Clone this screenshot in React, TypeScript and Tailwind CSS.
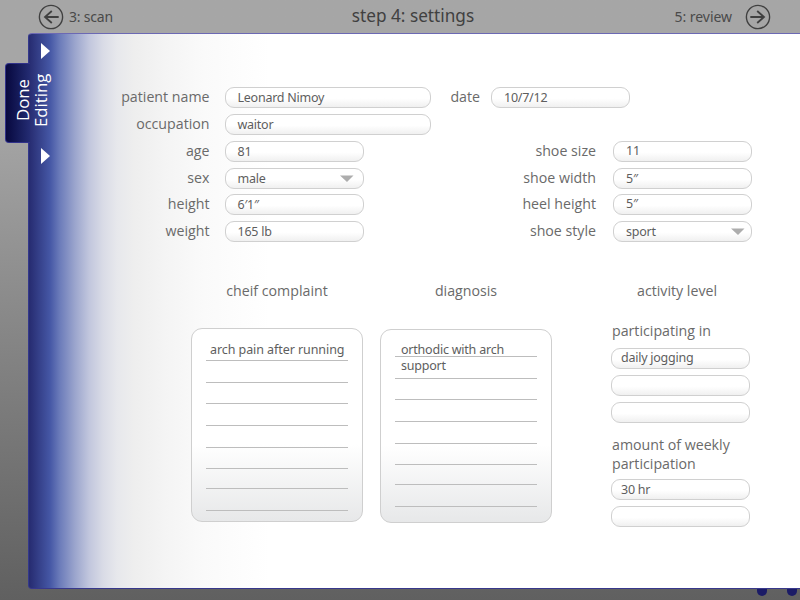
import React from "react";

const labelFont = "font-['Open_Sans','Noto_Sans',sans-serif] text-[14.2px] leading-[19px] text-[#6a6a6a] whitespace-nowrap";
const valueFont = "font-['Noto_Sans','Open_Sans',sans-serif] text-[12.5px] text-[#5e5e5e] whitespace-nowrap";

function Label({ children, className = "" }: { children: React.ReactNode; className?: string }) {
  return <span className={`${labelFont} ${className}`}>{children}</span>;
}

function RowLabel({ children, className }: { children: React.ReactNode; className: string }) {
  return <Label className={`pb-[2px] text-right ${className}`}>{children}</Label>;
}

function Field({
  value = "",
  wide = false,
  select = false,
  pad = "pl-[12px] pr-[8px]",
  className = "pt-[2px]",
}: {
  value?: string;
  wide?: boolean;
  select?: boolean;
  pad?: string;
  className?: string;
}) {
  return (
    <div
      className={`flex h-[21px] shrink-0 items-center justify-between rounded-[9px] border border-[#d0d0d0] bg-linear-to-b from-white from-55% to-[#f0f0f0] ${pad} ${wide ? "w-[206px]" : "w-[139px]"}`}
    >
      <span className={`tracking-[-0.25px] ${valueFont} ${className}`}>{value}</span>
      {select && (
        <svg width="14" height="7" viewBox="0 0 14 7" className="shrink-0">
          <path d="M0 0.5H13.5L7 7Z" fill="#adadad" />
        </svg>
      )}
    </div>
  );
}

function Arrow({ back = false }: { back?: boolean }) {
  return (
    <svg width="26" height="26" viewBox="0 0 26 26" fill="none" stroke="#404040" className={back ? "rotate-180" : ""}>
      <circle cx="13" cy="13" r="11.6" strokeWidth="1.4" />
      <path d="M5.3 13H19M12.2 7L19 13L12.2 19" strokeWidth="1.8" />
    </svg>
  );
}

function Triangle() {
  return (
    <svg width="9" height="16" viewBox="0 0 9 16">
      <path d="M0 0L9 8L0 16Z" fill="#fff" />
    </svg>
  );
}

function Row({ children, gap = "mb-[6px]" }: { children: React.ReactNode; gap?: string }) {
  return <div className={`flex h-[21px] items-center ${gap}`}>{children}</div>;
}

function Notepad({ top, lines, children }: { top: string; lines: string[]; children: React.ReactNode }) {
  return (
    <div className={`relative h-[194px] w-[172px] rounded-[11px] border border-[#cfcfcf] bg-linear-to-b from-white from-60% to-[#e7e8e9] px-[14px] ${top}`}>
      {lines.map((h, i) => (
        <div key={i} className={`border-b border-[#bdbdbd] ${h}`} />
      ))}
      {children}
    </div>
  );
}

export default function App() {
  return (
    <div className="h-[600px] w-[800px] overflow-hidden bg-linear-to-b from-[#a6a6a6] from-20% to-[#606060]">
      <header className="flex h-[33px] items-center justify-between pl-[38px] pr-[29px] font-['Noto_Sans','Open_Sans',sans-serif] text-[#4a4a4a]">
        <div className="flex w-[188px] items-center gap-[5px]">
          <Arrow back />
          <span className="text-[14px] tracking-[-0.2px]">3: scan</span>
        </div>
        <h1 className="pb-[2px] text-[17.2px] leading-[24px] text-[#404040]">step 4: settings</h1>
        <div className="flex w-[171px] items-center justify-end gap-[13px]">
          <span className="text-[14px] tracking-[-0.05px]">5: review</span>
          <Arrow />
        </div>
      </header>

      <div className="flex h-[556px]">
        <aside className="relative z-10 w-[28px] shrink-0 pl-[5px] pt-[30px]">
          <div className="h-[80px] w-[25px] rounded-l-[4px] border border-r-0 border-[#30318a] bg-linear-to-r from-[#08083f] to-[#242c73]" />
          <div className="absolute left-[41px] top-[10px] flex flex-col gap-[89px]">
            <Triangle />
            <Triangle />
          </div>
          <div className="absolute left-[14px] top-[38px] flex h-[56px] w-[38px] rotate-180 font-['Open_Sans',sans-serif] text-[16.8px] leading-[18px] text-white [writing-mode:vertical-rl]">
            <div>
              <span className="inline-block pt-[6px]">Done</span>
              <br />
              Editing
            </div>
          </div>
        </aside>

        <main className="flex-1 rounded-l-[4px] border border-r-0 border-t-[#6c69b4] border-b-[#38388c] border-l-[#34388c] bg-[linear-gradient(90deg,#262b70_0px,#4557a5_21px,#6c7cba_31px,#9ba5cd_46px,#c1c6dd_60px,#d9dbe6_74px,#e7e8ec_88px,#eee_105px,#f4f4f4_135px,#fafafa_175px,#fff_240px)] pt-[53px]">
          <section>
            <Row>
              <RowLabel className="mr-[15px] w-[180.5px]">patient name</RowLabel>
              <Field wide value="Leonard Nimoy" />
              <RowLabel className="mr-[11px] w-[49.5px]">date</RowLabel>
              <Field value="10/7/12" />
            </Row>
            <Row>
              <RowLabel className="mr-[15px] w-[180.5px]">occupation</RowLabel>
              <Field wide value="waitor" className="pt-[2px]" />
            </Row>
            <Row>
              <RowLabel className="mr-[15px] w-[180.5px]">age</RowLabel>
              <Field value="81" className="pt-[2px]" />
              <RowLabel className="mr-[17px] w-[232.5px]">shoe size</RowLabel>
              <Field value="11" className="pt-0" />
            </Row>
            <Row gap="mb-[5px]">
              <RowLabel className="mr-[15px] w-[180.5px]">sex</RowLabel>
              <Field select value="male" pad="pl-[12px] pr-[9px]" />
              <RowLabel className="mr-[17px] w-[232.5px]">shoe width</RowLabel>
              <Field value="5″" />
            </Row>
            <Row>
              <RowLabel className="mr-[15px] w-[180.5px]">height</RowLabel>
              <Field value="6′1″" />
              <RowLabel className="mr-[17px] w-[232.5px]">heel height</RowLabel>
              <Field value="5″" className="pt-0" />
            </Row>
            <Row gap="mb-0">
              <RowLabel className="mr-[15px] w-[180.5px]">weight</RowLabel>
              <Field value="165 lb" />
              <RowLabel className="mr-[17px] w-[232.5px]">shoe style</RowLabel>
              <Field select value="sport" pad="pl-[12px] pr-[6px]" />
            </Row>
          </section>

          <section className="ml-[162px] mt-[39px] flex">
            <div className="flex w-[172px] flex-col items-center">
              <Label>cheif complaint</Label>
              <Notepad
                top="mt-[28px]"
                lines={["h-[32px]", "h-[22px]", "h-[21px]", "h-[22px]", "h-[22px]", "h-[21px]", "h-[20px]", "h-[22px]"]}
              >
                <p className={`absolute left-[18px] top-[13px] leading-[16px] tracking-[-0.07px] ${valueFont}`}>arch pain after running</p>
              </Notepad>
            </div>
            <div className="ml-[17px] flex w-[172px] flex-col items-center">
              <Label>diagnosis</Label>
              <Notepad
                top="mt-[29px]"
                lines={["h-[27px]", "h-[22px]", "h-[21px]", "h-[22px]", "h-[22px]", "h-[21px]", "h-[20px]", "h-[22px]"]}
              >
                <p className={`absolute left-[20px] top-[12px] leading-[16px] tracking-[-0.22px] ${valueFont}`}>
                  orthodic with arch
                  <br />
                  support
                </p>
              </Notepad>
            </div>
            <div className="ml-[59px] flex w-[139px] flex-col">
              <Label className="ml-[26px]">activity level</Label>
              <Label className="ml-[1px] mt-[21px]">participating in</Label>
              <div className="mt-[8px] flex flex-col gap-[6px]">
                <Field value="daily jogging" pad="pl-[9px]" className="pt-0" />
                <Field />
                <Field />
              </div>
              <Label className="ml-[1px] mt-[12px]">
                amount of weekly
                <br />
                participation
              </Label>
              <div className="mt-[6px] flex flex-col gap-[6px]">
                <Field value="30 hr" pad="pl-[9px]" />
                <Field />
              </div>
            </div>
          </section>
        </main>
      </div>
      <div className="flex justify-end gap-[20px] pr-[3px]">
        <div className="h-[7px] w-[10px] rounded-b-full bg-[#1b1b66]" />
        <div className="h-[7px] w-[10px] rounded-b-full bg-[#1b1b66]" />
      </div>
    </div>
  );
}
